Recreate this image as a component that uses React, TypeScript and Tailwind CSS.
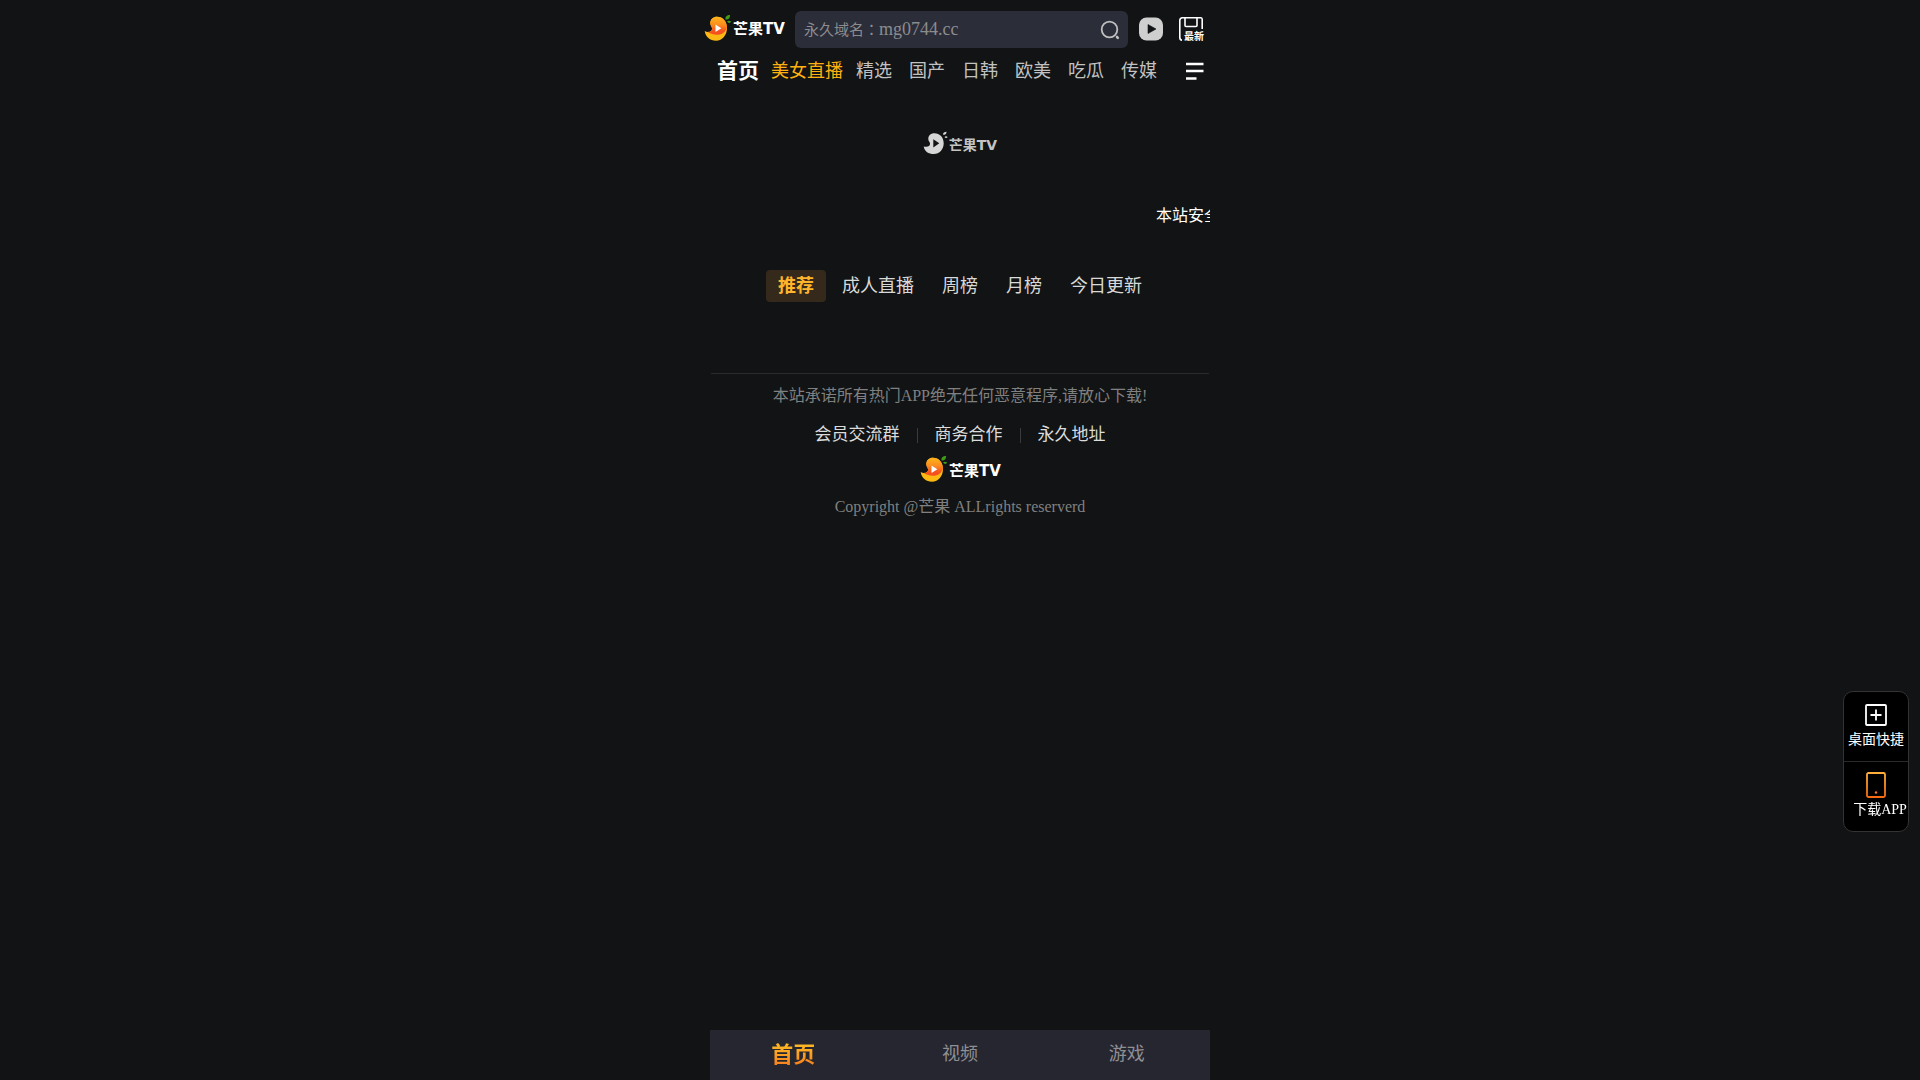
import React from "react";

const NAV = ["精选", "国产", "日韩", "欧美", "吃瓜", "传媒"];
const TABS = ["推荐", "成人直播", "周榜", "月榜", "今日更新"];
const LINKS = ["会员交流群", "商务合作", "永久地址"];

function Logo({ id }: { id: string }) {
  return (
    <span className="flex h-7 w-20 shrink-0 items-center">
      <svg viewBox="0 0 28 28" className="h-7 w-7 shrink-0" aria-hidden="true">
        <defs>
          <linearGradient id={id + "-top"} x1="0" y1="0" x2="0" y2="1">
            <stop offset="0" stopColor="#fdb51c" />
            <stop offset="0.45" stopColor="#fb8c1e" />
            <stop offset="0.8" stopColor="#f4511e" />
          </linearGradient>
        </defs>
        <path
          d="M.7 17C4 19 8.6 17.6 8 14 7.5 12 6.3 11.5 6.3 9c0-4 3-6.3 6.7-6.3C19 2.700 23 7.500 23 14c0 7-4.500 12.700-11 12.700C6 26.700 1.500 23 .7 17Z"
          fill="#fdb913"
        />
        <path
          d="M4 18.300c3.200-.6 4.400-2.200 4-4.300-.5-2-1.700-2.500-1.700-5 0-4 3-6.300 6.700-6.300 5.500 0 9.500 4.500 9.900 10.300C22 18 18 20.800 13 20.800c-3.500 0-6.500-.9-9-2.500Z"
          fill={`url(#${id}-top)`}
        />
        <path d="M11.500 10.600v7.400l5.800-3.700Z" fill="#fff" />
        <path d="M21.500 5.500C21 2.700 22.800 1.100 26 1c.2 2.900-1.300 5-4.500 4.500Z" fill="#3f9c16" />
        <path d="M23 7.600c1.200-1.200 3-1.200 4.200.2-1.200 1.500-3 1.500-4.200-.2Z" fill="#3f9c16" />
      </svg>
      <span className="mt-0.5 ml-px whitespace-nowrap font-['Noto_Sans_CJK_SC',sans-serif] text-[15px] leading-none font-bold text-white">
        芒果<span className="font-['DejaVu_Sans',sans-serif] text-[15px] font-bold">TV</span>
      </span>
    </span>
  );
}

function MutedLogo() {
  return (
    <span className="flex h-6 items-center">
      <svg viewBox="0 0 25 24" className="h-6 w-[25px] shrink-0" aria-hidden="true">
        <path
          fillRule="evenodd"
          d="M.7 15.500C4 16.500 7.500 15.500 7 12.300 6.500 10.500 5.300 10 5.300 7.800 5.300 4.300 8 2.200 11.300 2.200c5.600 0 9.400 4.300 9.400 10 0 6.100-4.200 10.800-9.900 10.800C5.500 23 1.500 20.500.7 15.500ZM10.300 8.200v8.200l6-4.100Z"
          fill="#d6d6d6"
        />
        <path d="M20 3.500C20 1.800 21.500.8 23.500.8c0 2-1.200 3.500-3.500 2.700Z" fill="#d6d6d6" />
        <path d="M21.500 6c1-1 2.500-.8 3.200.2-1 1-2.500.9-3.200-.2Z" fill="#d6d6d6" />
      </svg>
      <span className="mt-0.5 ml-px whitespace-nowrap font-['Noto_Sans_CJK_SC',sans-serif] text-sm leading-none font-bold text-[#c4c4c4]">
        芒果<span className="font-['DejaVu_Sans',sans-serif]">TV</span>
      </span>
    </span>
  );
}

export default function App() {
  return (
    <div className="min-h-screen bg-[#111314] font-['Liberation_Serif','Noto_Sans_CJK_SC',serif] text-white">
      <div className="mx-auto flex min-h-screen w-full max-w-[500px] flex-col">
        <header>
          <div className="flex items-center pt-[11px] pr-[7px]">
            <a href="#" aria-label="芒果TV" className="-ml-1.5 pb-1">
              <Logo id="head" />
            </a>
            <form className="ml-[11px] flex h-[37px] min-w-0 flex-1 items-center rounded-md bg-[#2b2d38] pr-2 pl-[9px] text-[#8c8c8f]">
              <label htmlFor="search" className="shrink-0 text-[15px]">
                永久域名<span className="font-['Noto_Sans_CJK_TC',sans-serif]">：</span>
              </label>
              <input
                id="search"
                type="text"
                placeholder="mg0744.cc"
                className="mb-0.5 min-w-0 flex-1 bg-transparent text-lg outline-none placeholder:text-[#8c8c8f]"
              />
              <button type="button" aria-label="搜索" className="shrink-0">
                <svg viewBox="0 0 20 20" className="h-5 w-5" fill="none" stroke="#bfbfbf" strokeWidth="1.800">
                  <circle cx="9.500" cy="9.500" r="7.800" />
                  <path d="M17 17l.8.8" strokeWidth="2.600" strokeLinecap="round" />
                </svg>
              </button>
            </form>
            <button type="button" aria-label="播放" className="ml-[11px] shrink-0 pb-0.5">
              <svg viewBox="0 0 24 24" className="h-6 w-6">
                <rect x="0" y="0.500" width="24" height="23" rx="7.500" fill="#cfcfcf" />
                <path d="M9 7.500v9l8-4.500Z" fill="#111314" stroke="#111314" strokeLinejoin="round" strokeWidth=".6" />
              </svg>
            </button>
            <button type="button" aria-label="最新" className="relative mb-0.5 ml-4 h-6 w-6 shrink-0">
              <svg viewBox="0 0 24 24" className="h-6 w-6" fill="none" stroke="#fff" strokeWidth="1.600">
                <path d="M3 23.200Q.8 23 .8 20.500V3.500Q.8.8 3.500.8H22Q23.200.8 23.200 2.500V12" />
                <path d="M6 1v7.500q0 1 1 1h10q1 0 1-1V1" />
              </svg>
              <span className="absolute top-3.5 left-[5px] font-['Noto_Sans_CJK_SC',sans-serif] text-[10px] leading-[10px] font-bold whitespace-nowrap">
                最新
              </span>
            </button>
          </div>
          <nav className="mt-[11px] flex h-6 items-center pr-1.5 pl-[7px] text-lg leading-6 whitespace-nowrap text-[#c2c2c2]">
            <a href="#" className="text-[21px] font-bold text-white">首页</a>
            <a href="#" className="ml-3 text-[#ffb20f]">美女直播</a>
            <span className="ml-[13px] flex gap-[17px]">
              {NAV.map((n) => (
                <a key={n} href="#">{n}</a>
              ))}
            </span>
            <button type="button" aria-label="菜单" className="ml-auto">
              <svg viewBox="0 0 18 18" className="h-[18px] w-[18px]" stroke="#fff" strokeWidth="2.400">
                <path d="M0 2h17.500M0 9h17.500M0 16.500h10.500" />
              </svg>
            </button>
          </nav>
        </header>

        <main>
          <div className="mt-12 flex justify-center">
            <MutedLogo />
          </div>
          <div className="mt-[49px] flex h-6 overflow-hidden">
            <p className="ml-[446px] shrink-0 text-base leading-6 whitespace-nowrap">本站安全</p>
          </div>
          <div className="mt-[42px] flex justify-center gap-1 text-lg leading-8 text-[#d9d9d9]">
            {TABS.map((t, i) => (
              <button
                key={t}
                type="button"
                className={
                  i === 0
                    ? "h-8 rounded-sm bg-[#35291b] px-3 font-bold text-[#ffb52b]"
                    : "h-8 px-3"
                }
              >
                {t}
              </button>
            ))}
          </div>
        </main>

        <footer className="mx-px mt-[71px] flex flex-col items-center border-t border-[#2a2b2d] pt-2.5 text-[#808080]">
          <p className="text-base leading-6">本站承诺所有热门APP绝无任何恶意程序,请放心下载!</p>
          <div className="mt-[15px] flex items-center text-[17px] leading-6 text-[#dcdcdc]">
            {LINKS.map((l, i) => (
              <React.Fragment key={l}>
                {i > 0 && <span className="mx-[17px] h-[15px] w-px bg-[#3a3b3d]" />}
                <a href="#">{l}</a>
              </React.Fragment>
            ))}
          </div>
          <div className="mt-2">
            <Logo id="foot" />
          </div>
          <p className="mt-3 text-base leading-6">Copyright @芒果 ALLrights reserverd</p>
        </footer>

        <nav className="sticky bottom-0 mt-auto grid h-[50px] grid-cols-3 bg-[#262631] text-center text-lg leading-[49px] text-[#8f8f93]">
          <a href="#" className="text-[22px] font-bold">
            <span className="inline-block bg-linear-to-b from-[#ffb524] from-30% to-[#f5841f] to-70% bg-clip-text leading-[46px] text-transparent">
              首页
            </span>
          </a>
          <a href="#">视频</a>
          <a href="#">游戏</a>
        </nav>
      </div>

      <aside className="fixed right-[11px] bottom-[248px] w-[66px] overflow-hidden rounded-[10px] border border-[#333] bg-black text-sm leading-5 whitespace-nowrap">
        <a href="#" className="flex h-[70px] flex-col items-center border-b border-[#2a2a2a] pt-3">
          <svg viewBox="0 0 22 22" className="h-[22px] w-[22px]" fill="none" stroke="#fff" strokeWidth="1.800">
            <rect x="1" y="1" width="20" height="20" rx="1" />
            <path d="M11 5.500v11M5.500 11h11" />
          </svg>
          <span className="mt-1">桌面快捷</span>
        </a>
        <a href="#" className="flex h-[69px] flex-col items-center pt-2.5">
          <svg viewBox="0 0 20 26" className="h-[26px] w-5" fill="none">
            <defs>
              <linearGradient id="phone" x1="0" y1="0" x2="0" y2="1">
                <stop offset="0" stopColor="#ffae3d" />
                <stop offset="1" stopColor="#f76b0f" />
              </linearGradient>
            </defs>
            <rect x="1" y="1" width="18" height="24" rx="1.500" stroke="url(#phone)" strokeWidth="1.800" />
            <circle cx="10" cy="20.500" r="1.200" fill="#f8791c" />
          </svg>
          <span className="mt-0.5 pl-2">下载APP</span>
        </a>
      </aside>
    </div>
  );
}
